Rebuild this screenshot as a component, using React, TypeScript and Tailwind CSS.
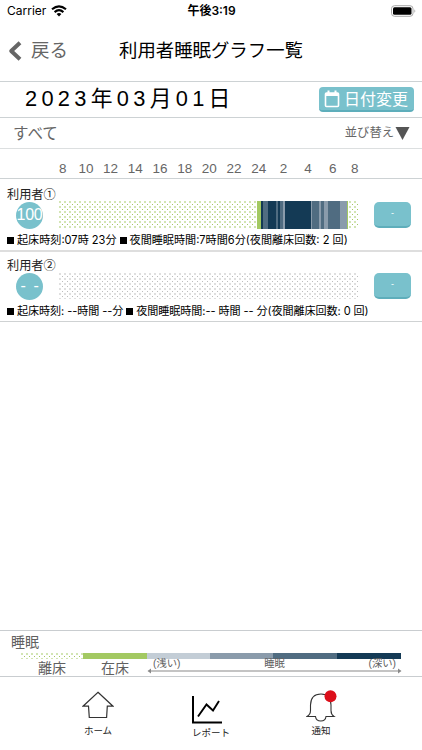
const hours = ["10", "12", "14", "16", "18", "20", "22", "24", "2", "4", "6"];

const NAVY = "#143a55";
const SLATE = "#506c81";
const LIGHT = "#8a9bab";
const GREEN = "#a3c962";

// [width in px, colour] - one entry per sleep phase
const phases: [number, string][] = [
  [198, "transparent"],
  [4, GREEN],
  [2, NAVY],
  [5, SLATE],
  [8, NAVY],
  [2, SLATE],
  [2.3, NAVY],
  [2.7, SLATE],
  [2, LIGHT],
  [26, NAVY],
  [1.5, LIGHT],
  [6.5, SLATE],
  [2, LIGHT],
  [3, SLATE],
  [4, LIGHT],
  [12.3, SLATE],
  [6.7, LIGHT],
  [1, GREEN],
];

const greenDots =
  "bg-[radial-gradient(circle_at_1px_1px,#a3c962_0.4px,transparent_1px),radial-gradient(circle_at_3.5px_3.5px,#a3c962_0.4px,transparent_1px)] bg-size-[5px_5px]";
const grayDots =
  "bg-[radial-gradient(circle_at_1px_1px,#bdbdbd_0.4px,transparent_1px),radial-gradient(circle_at_3.5px_3.5px,#bdbdbd_0.4px,transparent_1px)] bg-size-[5px_5px]";

const StatusBar = () => (
  <div className="flex h-[21px] items-center justify-between pl-[7px] pr-[6px] text-black">
    <div className="flex w-[120px] items-center gap-[5px] font-['Inter'] text-[12px]">
      <span>Carrier</span>
      <svg width="16" height="12" viewBox="0 0 16 12" fill="none" stroke="#000" strokeWidth="2.1">
        <path d="M1 4.3Q8 -1.7 15 4.3" />
        <path d="M3.6 7.1Q8 3.3 12.4 7.1" />
        <path d="M5.6 8.9Q8 7 10.4 8.9L8 11.5Z" fill="#000" stroke="none" />
      </svg>
    </div>
    <span className="font-['Inter','Noto_Sans_CJK_JP',sans-serif] text-[12px] font-semibold">
      午後3:19
    </span>
    <div className="flex w-[120px] justify-end">
      <svg width="25" height="12" viewBox="0 0 25 12">
        <rect x="0.5" y="0.7" width="21.5" height="10.6" rx="3" fill="#fff" stroke="#a8a8a8" />
        <rect x="2" y="2.2" width="18.5" height="7.6" rx="1.5" fill="#000" />
        <path d="M23.4 4.2Q25.2 6 23.4 7.8Z" fill="#a8a8a8" />
      </svg>
    </div>
  </div>
);

const Square = () => <span className="size-[7px] shrink-0 bg-black" />;

type UserRowProps = {
  name: string;
  score: string;
  wake: string;
  sleep: string;
  active?: boolean;
};

const UserRow = ({ name, score, wake, sleep, active }: UserRowProps) => (
  <div
    className={
      active
        ? "flex h-[73px] flex-col border-b-2 border-[#dedede] pt-[7px]"
        : "flex h-[70px] flex-col border-b border-[#cfd2d3] pt-[5px]"
    }
  >
    <div className="h-[15px] pl-[7px] text-[12.2px] leading-[18px] text-[#222]">{name}</div>
    <div className="flex h-[28px] items-center pl-[16px]">
      <div
        className={`flex size-[27px] items-center justify-center rounded-full bg-[#79c1cc] text-[16px] leading-none text-white ${
          active ? "tracking-[-0.3px]" : "whitespace-nowrap pl-[2px] tracking-[1.6px]"
        }`}
      >
        {score}
      </div>
      <div
        className={`ml-[16px] flex w-[299px] ${active ? `h-[28px] ${greenDots}` : `h-[26px] ${grayDots}`}`}
      >
        {active &&
          phases.map(([width, color], i) => (
            <div key={i} className="h-full shrink-0" style={{ width, backgroundColor: color }} />
          ))}
      </div>
      <div className="ml-[16px] flex h-[26px] w-[37px] items-center justify-center rounded-[5px] border-b-2 border-[#5eaebb] bg-[#79c1cc] text-[9px] text-white">
        -
      </div>
    </div>
    <div
      className={`flex h-[20px] items-center gap-[3px] whitespace-pre pl-[7px] pt-[2px] font-['Inter','Noto_Sans_CJK_JP',sans-serif] text-[11.1px] leading-none text-black ${
        active ? "" : "tracking-[-0.09px]"
      }`}
    >
      <Square />
      <span className="pt-[2px]">{wake}</span>
      <Square />
      <span className="pt-[2px]">{sleep}</span>
    </div>
  </div>
);

const Legend = () => (
  <div className="h-[47px] border-y border-[#c9cdd0] pl-[11px] text-[#606060]">
    <div className="h-[22px] text-[14px] leading-[22px]">睡眠</div>
    <div className="ml-[10px] flex h-[6px] w-[380px]">
      <div className={`w-[62px] ${greenDots}`} />
      <div className="w-[64px] bg-[#a3c962]" />
      <div className="w-[63px] bg-[#c3cdd6]" />
      <div className="w-[63px] bg-[#8a9bab]" />
      <div className="w-[64px] bg-[#506c81]" />
      <div className="w-[64px] bg-[#143a55]" />
    </div>
    <div className="flex h-[17px] text-[14px] leading-[19px]">
      <div className="ml-[10px] w-[62px] text-center">離床</div>
      <div className="w-[64px] text-center">在床</div>
      <div className="flex w-[255px] flex-col">
        <div className="flex h-[9px] justify-between pl-[6px] pr-[6px] text-[10.3px] leading-[9px]">
          <span>(浅い)</span>
          <span>睡眠</span>
          <span>(深い)</span>
        </div>
        <svg width="255" height="6" viewBox="0 0 255 6" fill="#8a8a8a">
          <path d="M3 2.5H252V3.5H3Z" />
          <path d="M0.5 3L4 0.5V5.5Z" />
          <path d="M254.5 3L251 0.5V5.5Z" />
        </svg>
      </div>
    </div>
  </div>
);

const TabBar = () => (
  <div className="flex h-[73px] text-[9.5px] leading-[12px] text-[#222]">
    <div className="ml-[42px] flex w-[112px] flex-col items-center pt-[14px]">
      <svg width="32" height="28" viewBox="0 0 32 28" fill="none" stroke="#333" strokeWidth="1.2">
        <path d="M16 1.2L31 15.2H25.3L24.6 26.5H7.3L6.5 15.2H1Z" />
      </svg>
      <span className="mt-[6px]">ホーム</span>
    </div>
    <div className="flex w-[114px] flex-col items-center pt-[18px]">
      <svg width="32" height="29" viewBox="0 0 32 29" fill="none" stroke="#000" className="mr-[8px]">
        <path d="M2 1V27.5H31" strokeWidth="2" />
        <path d="M7 21.5L15.5 9.5L22 15.5L28 6" strokeWidth="1.9" />
      </svg>
      <span className="mt-[3px]">レポート</span>
    </div>
    <div className="flex w-[106px] flex-col items-center pt-[13px]">
      <svg width="32" height="34" viewBox="0 0 32 34" className="ml-[2px]">
        <g fill="none" stroke="#333" strokeWidth="1.1">
          <path d="M1 26.5Q4.5 24.5 4.5 20.5V15Q4.8 4 15 4Q24.8 4 25 15V20.5Q25 24.5 28 26.5H20Q19.5 31 14.8 31Q10 31 9.5 26.5Z" />
        </g>
        <circle cx="24.5" cy="6.2" r="6" fill="#dc0f1a" />
      </svg>
      <span className="mt-[1px]">通知</span>
    </div>
  </div>
);

const App = () => {
  return (
    <div className="flex h-[750px] w-[422px] flex-col overflow-hidden bg-white font-['Liberation_Sans','Noto_Sans_CJK_JP',sans-serif]">
      <StatusBar />

      {/* Title bar */}
      <div className="flex h-[61px] items-center border-b border-[#cdd2d4] pl-[8px]">
        <svg width="14" height="20" viewBox="0 0 14 20" fill="none" stroke="#666" strokeWidth="4">
          <path d="M12 1.8L3.2 10L12 18.2" strokeLinejoin="round" />
        </svg>
        <span className="ml-[9px] text-[18.5px] text-[#666]">戻る</span>
        <h1 className="ml-[51px] whitespace-nowrap text-[18.4px] text-black">利用者睡眠グラフ一覧</h1>
      </div>

      {/* Selected date */}
      <div className="flex h-[36px] items-center justify-between border-b border-[#cdd2d4] pl-[25px] pr-[8px]">
        <span className="whitespace-nowrap text-[21.8px] tracking-[4.3px] text-black">
          2023年03月01日
        </span>
        <button className="flex h-[25px] w-[95px] items-center gap-[4px] rounded-[4px] border-b-2 border-[#5eaebb] bg-[#79c1cc] pl-[5px] text-[16px] leading-none text-white">
          <svg width="16" height="18" viewBox="0 0 16 18" fill="none" stroke="#fff">
            <rect x="1.5" y="3" width="13" height="13.5" rx="1" strokeWidth="1.6" />
            <path d="M1 4.5H15" strokeWidth="3" />
            <path d="M4.5 0.5V4M11.5 0.5V4" strokeWidth="2" />
          </svg>
          <span className="whitespace-nowrap pt-[2px]">日付変更</span>
        </button>
      </div>

      {/* Filter / sort */}
      <div className="flex h-[31px] items-center justify-between border-b border-[#dcdfe0] pl-[13px] pr-[12px] pt-px text-[#666]">
        <span className="text-[15.5px]">すべて</span>
        <div className="flex items-center gap-[1px] text-[12.3px]">
          <span>並び替え</span>
          <svg width="15" height="13" viewBox="0 0 14 13" fill="#555">
            <path d="M0 0H14L7 13Z" />
          </svg>
        </div>
      </div>

      {/* Hour axis */}
      <div className="flex h-[30px] items-center border-b border-[#cdd2d4] pl-[52px] pt-[11px] text-[13.5px] leading-none text-[#666]">
        <span className="w-[21.6px] text-center">8</span>
        {hours.map((h) => (
          <span key={h} className="w-[24.7px] text-center">
            {h}
          </span>
        ))}
        <span className="w-[19px] text-center">8</span>
      </div>

      <UserRow
        name="利用者①"
        score="100"
        wake="起床時刻:07時 23分"
        sleep="夜間睡眠時間:7時間6分(夜間離床回数: 2 回)"
        active
      />
      <UserRow
        name="利用者②"
        score="- -"
        wake="起床時刻: --時間 --分"
        sleep="夜間睡眠時間:-- 時間 -- 分(夜間離床回数: 0 回)"
      />

      <div className="flex-1" />

      <Legend />
      <TabBar />
    </div>
  );
};

export default App;
